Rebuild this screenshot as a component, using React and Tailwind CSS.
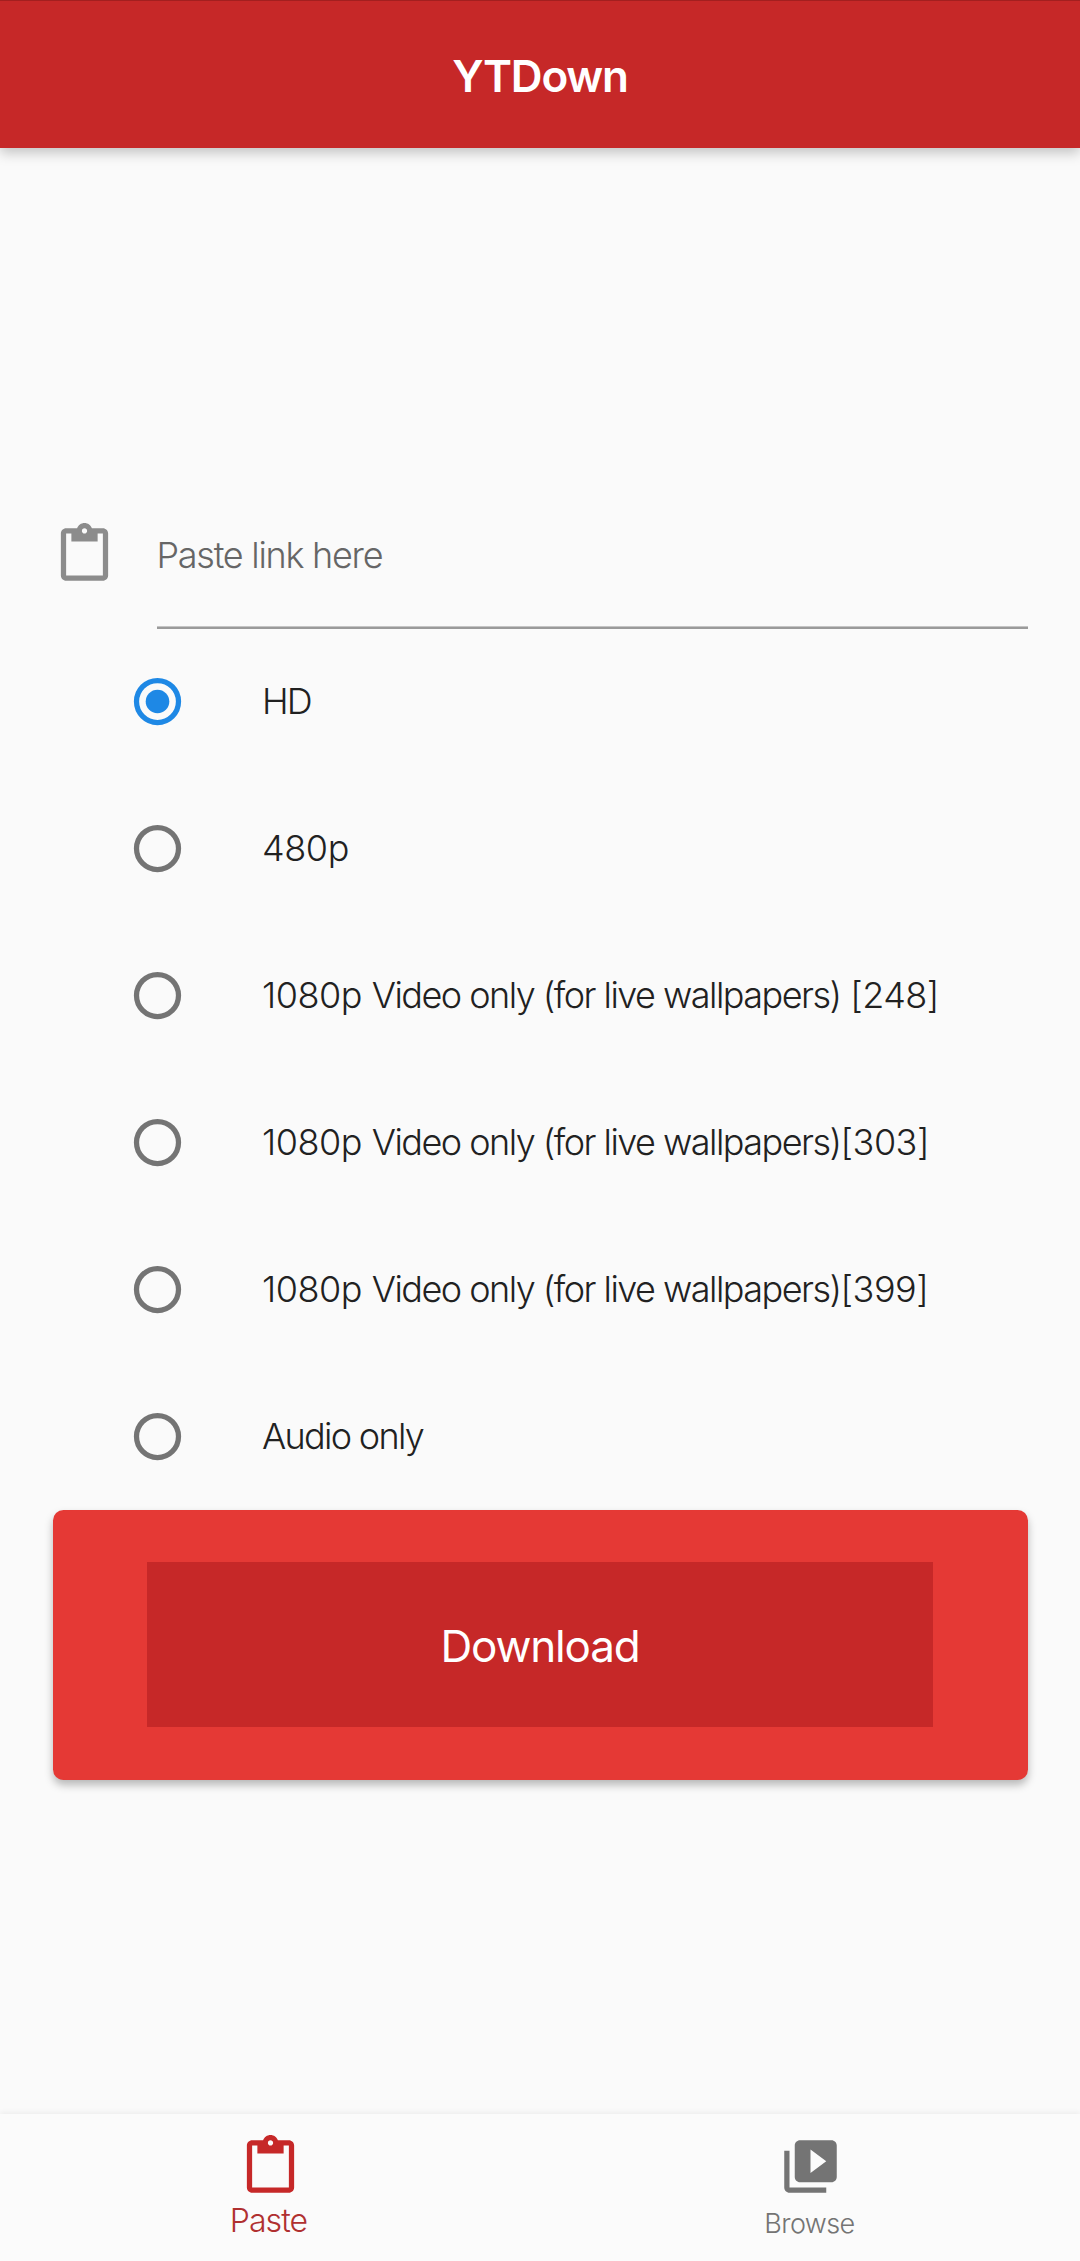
import React, { useState } from "react";

function ClipboardIcon({ className }) {
  return (
    <svg viewBox="0 0 24 24" fill="currentColor" className={className}>
      <path d="M19 2h-4.18C14.4.84 13.3 0 12 0c-1.3 0-2.4.84-2.82 2H5c-1.1 0-2 .9-2 2v16c0 1.1.9 2 2 2h14c1.1 0 2-.9 2-2V4c0-1.1-.9-2-2-2zm-7 0c.55 0 1 .45 1 1s-.45 1-1 1-1-.45-1-1 .45-1 1-1zm7 18H5V4h2v3h10V4h2v16z" />
    </svg>
  );
}

function VideoLibraryIcon({ className }) {
  return (
    <svg viewBox="0 0 24 24" fill="currentColor" className={className}>
      <path d="M4 6H2v14c0 1.1.9 2 2 2h14v-2H4V6zm16-4H8c-1.1 0-2 .9-2 2v12c0 1.1.9 2 2 2h12c1.1 0 2-.9 2-2V4c0-1.1-.9-2-2-2zm-8 12.5v-9l6 4.5-6 4.5z" />
    </svg>
  );
}

function RadioIcon({ checked }) {
  return (
    <svg
      viewBox="0 0 24 24"
      className={checked ? "size-[63px] text-[#1e88e5]" : "size-[63px] text-[#747474]"}
    >
      <circle cx="12" cy="12" r="8" fill="none" stroke="currentColor" strokeWidth="2" />
      {checked && <circle cx="12" cy="12" r="4.5" fill="currentColor" />}
    </svg>
  );
}

function VideoOnly({ tag }) {
  return (
    <>
      <span className="tracking-[-0.45px]">1080p </span>
      <span className="tracking-[-1.53px]">Video only (for live wallpapers)</span>
      <span className="tracking-[-0.5px]">{tag}</span>
    </>
  );
}

const options = [
  { id: "hd", label: <span className="tracking-[-1.8px]">HD</span> },
  { id: "480", label: <span className="tracking-[-0.4px]">480p</span> },
  { id: "248", label: <VideoOnly tag=" [248]" /> },
  { id: "303", label: <VideoOnly tag="[303]" /> },
  { id: "399", label: <VideoOnly tag="[399]" /> },
  { id: "audio", label: <span className="tracking-[-1.7px]">Audio only</span> },
];

export default function App() {
  const [selected, setSelected] = useState("hd");
  return (
    <div className="flex h-[2261px] w-[1080px] flex-col overflow-hidden bg-[#fafafa] font-['Inter','Liberation_Sans',sans-serif] font-light text-[#212121]">
      <header className="z-10 flex h-[148px] shrink-0 items-center justify-center border-t border-[#a31f1f] bg-[#c62828] pt-[3px] shadow-[0_5px_12px_rgba(0,0,0,0.22)]">
        <h1 className="text-[44px] font-semibold leading-none tracking-[-1.2px] whitespace-nowrap text-white">
          YTDown
        </h1>
      </header>

      <main className="flex flex-1 flex-col px-[52.5px] pt-[375px]">
        <div className="flex h-[106px] gap-[42px]">
          <ClipboardIcon className="size-[63px] shrink-0 text-[#8c8c8c]" />
          <div className="flex flex-1 flex-col justify-between pt-[10px]">
            <span className="-ml-[1px] text-[36px] leading-[44px] tracking-[-1.27px] text-[#666]">
              Paste link here
            </span>
            <div className="-ml-[0.5px] h-[3px] border-t border-[#c4c4c4] bg-[#9a9a9a]" />
          </div>
        </div>

        <div className="-mt-[1.5px] flex flex-col" role="radiogroup">
          {options.map((option) => (
            <button
              key={option.id}
              type="button"
              role="radio"
              aria-checked={selected === option.id}
              onClick={() => setSelected(option.id)}
              className="flex h-[147px] items-center gap-[73px] pl-[73.5px] text-left text-[36px] leading-none"
            >
              <RadioIcon checked={selected === option.id} />
              <span className="whitespace-pre">{option.label}</span>
            </button>
          ))}
        </div>

        <div className="flex h-[270px] rounded-[10.5px] bg-[#e53935] px-[94.5px] py-[52.5px] shadow-[0_5px_8px_rgba(0,0,0,0.27)]">
          <button
            type="button"
            className="flex flex-1 items-center justify-center bg-[#c62828] pt-[3px] text-[44px] font-normal leading-none tracking-[-1.2px] text-white"
          >
            Download
          </button>
        </div>
      </main>

      <nav className="flex h-[147px] shrink-0 bg-[#fbfbfb] shadow-[0_-2px_5px_rgba(0,0,0,0.05)]">
        <a className="flex flex-1 flex-col items-center pt-[21px] text-[#c62828]">
          <ClipboardIcon className="size-[63px]" />
          <span className="mt-[3px] mr-[3px] text-[32px] leading-[40px] tracking-[-0.9px] text-[#b03030]">Paste</span>
        </a>
        <a className="flex flex-1 flex-col items-center pt-[21px] text-[#747474]">
          <VideoLibraryIcon className="size-[63px]" />
          <span className="mt-[8px] mr-[1px] text-[27px] leading-[36px] tracking-[-0.6px]">Browse</span>
        </a>
      </nav>
    </div>
  );
}
